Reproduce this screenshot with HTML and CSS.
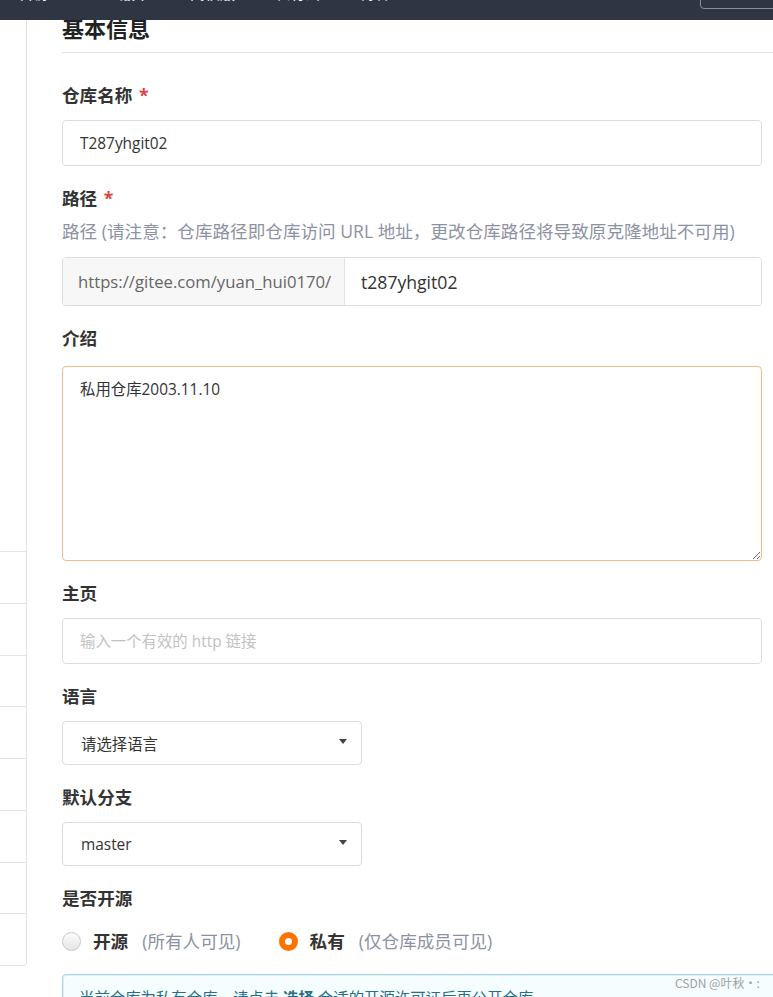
FILE: index.html
```html
<!DOCTYPE html>
<html lang="zh-CN">
<head>
  <meta charset="UTF-8" />
  <meta name="viewport" content="width=device-width, initial-scale=1.0"/>
  <title>仓库设置 - Gitee</title>
  <link rel="stylesheet" href="styles.css">
</head>
<body>
  <!-- Top Bar -->
  <div class="top-bar">
    <nav class="top-nav">
      <a>开源</a>
      <a>企业版本</a>
      <a>高校版</a>
      <a>私有云</a>
      <a>博客</a>
    </nav>
    <span class="top-btn"></span>
  </div>

  <div class="layout">
    <!-- Side Menu -->
    <aside class="side-menu">
      <div class="side-head"></div>
      <div class="side-item"></div>
      <div class="side-item"></div>
      <div class="side-item"></div>
      <div class="side-item"></div>
      <div class="side-item"></div>
      <div class="side-item"></div>
      <div class="side-item"></div>
      <div class="side-item"></div>
    </aside>

    <!-- Main Content -->
    <main class="main-content">
      <h2 class="section-title">基本信息</h2>

      <form class="repo-form">
        <div class="field">
          <label class="field-label">仓库名称 <span class="required">*</span></label>
          <input class="text-input" type="text" value="T287yhgit02">
        </div>

        <div class="field">
          <label class="field-label">路径 <span class="required">*</span></label>
          <div class="field-hint">路径 (请注意：仓库路径即仓库访问 URL 地址，更改仓库路径将导致原克隆地址不可用)</div>
          <div class="input-group">
            <span class="input-addon">https://gitee.com/yuan_hui0170/</span>
            <input class="group-input" type="text" value="t287yhgit02">
          </div>
        </div>

        <div class="field">
          <label class="field-label">介绍</label>
          <textarea class="text-area">私用仓库2003.11.10</textarea>
        </div>

        <div class="field">
          <label class="field-label">主页</label>
          <input class="text-input" type="text" placeholder="输入一个有效的 http 链接">
        </div>

        <div class="field">
          <label class="field-label">语言</label>
          <div class="select-box">
            <span>请选择语言</span>
            <i class="caret"></i>
          </div>
        </div>

        <div class="field">
          <label class="field-label">默认分支</label>
          <div class="select-box">
            <span>master</span>
            <i class="caret"></i>
          </div>
        </div>

        <div class="field field-last">
          <label class="field-label">是否开源</label>
          <div class="radio-row">
            <label class="radio-option">
              <span class="radio"></span>
              <strong>开源</strong>
              <span class="radio-note">(所有人可见)</span>
            </label>
            <label class="radio-option">
              <span class="radio checked"></span>
              <strong>私有</strong>
              <span class="radio-note">(仅仓库成员可见)</span>
            </label>
          </div>
        </div>

        <div class="info-box">
          当前仓库为私有仓库，请点击 <strong>选择</strong> 合适的开源许可证后再公开仓库
        </div>
      </form>
    </main>
  </div>

  <div class="watermark">CSDN @叶秋·:</div>
</body>
</html>
```

FILE: styles.css
```css
html, body {
  height: 100%;
}

body {
  margin: 0;
  overflow: hidden;
  background: #fff;
  font-family: "Open Sans", "Noto Sans CJK SC", sans-serif;
  color: #333;
}

.top-bar {
  position: relative;
  height: 20px;
  background: #2f3542;
  overflow: hidden;
}

.top-nav {
  display: flex;
  gap: 40px;
  padding-left: 20px;
  margin-top: -16px;
}

.top-nav a {
  color: #fff;
  font-size: 15px;
  line-height: 18px;
}

.top-btn {
  position: absolute;
  top: -10px;
  left: 700px;
  width: 100px;
  height: 17px;
  border: 1px solid #8a8f9c;
  border-radius: 4px;
}

.layout {
  display: flex;
  align-items: flex-start;
}

.side-menu {
  width: 26px;
  flex-shrink: 0;
  border-right: 1px solid #e3e3e3;
  border-bottom: 1px solid #e3e3e3;
  border-bottom-right-radius: 4px;
}

.side-head {
  height: 531px;
}

.side-item {
  height: 50.75px;
  border-top: 1px solid #e3e3e3;
}

.main-content {
  flex: 1;
  min-width: 0;
  margin-left: 35px;
}

.section-title {
  margin: -3px 0 0;
  padding-bottom: 13px;
  font-size: 22px;
  line-height: 22px;
  font-weight: bold;
  color: #222;
  border-bottom: 1px solid #e3e3e3;
}

.repo-form {
  width: 700px;
  padding-top: 29px;
}

.field {
  margin-bottom: 19px;
}

.field-label {
  display: block;
  margin-bottom: 12px;
  font-size: 17.6px;
  line-height: 26px;
  font-weight: bold;
  color: #333;
}

.required {
  color: #e0403d;
  margin-left: 2px;
}

.field-hint {
  margin: -5px 0 13px;
  font-size: 17.6px;
  line-height: 26px;
  color: #8c92a4;
}

.text-input {
  display: block;
  box-sizing: border-box;
  width: 100%;
  height: 46px;
  padding: 0 17px;
  border: 1px solid #dcdde1;
  border-radius: 4px;
  font-family: inherit;
  font-size: 15.4px;
  color: #333;
  outline: none;
}

.text-input::placeholder {
  color: #c2c2c2;
}

.input-group {
  display: flex;
  height: 49px;
  box-sizing: border-box;
  border: 1px solid #dcdde1;
  border-radius: 4px;
  overflow: hidden;
}

.input-addon {
  display: flex;
  align-items: center;
  width: 282px;
  box-sizing: border-box;
  padding-left: 15px;
  background: #f7f7f7;
  border-right: 1px solid #e3e3e3;
  font-size: 16.7px;
  color: #666;
  white-space: nowrap;
}

.group-input {
  flex: 1;
  border: none;
  padding: 0 16px;
  font-family: inherit;
  font-size: 17.6px;
  color: #333;
  outline: none;
}

.text-area {
  display: block;
  box-sizing: border-box;
  width: 100%;
  height: 195px;
  margin-top: 15px;
  padding: 12px 17px;
  border: 1px solid #f3b988;
  border-radius: 4px;
  font-family: inherit;
  font-size: 15.4px;
  line-height: 22px;
  color: #333;
  outline: none;
  resize: vertical;
}

.select-box {
  display: flex;
  align-items: center;
  justify-content: space-between;
  box-sizing: border-box;
  width: 300px;
  height: 44px;
  padding: 0 14px 0 18px;
  border: 1px solid #dcdde1;
  border-radius: 4px;
  font-size: 15.4px;
  color: #333;
}

.caret {
  width: 0;
  height: 0;
  border-top: 5px solid #444;
  border-left: 4px solid transparent;
  border-right: 4px solid transparent;
  margin-top: -3px;
}

.field-last {
  margin-bottom: 20px;
}

.radio-row {
  display: flex;
  gap: 38px;
  margin-top: 17px;
}

.radio-option {
  display: flex;
  align-items: center;
  font-size: 17.6px;
  line-height: 26px;
}

.radio-option strong {
  margin-left: 12px;
  color: #333;
}

.radio-note {
  margin-left: 14px;
  color: #8c92a4;
}

.radio {
  box-sizing: border-box;
  width: 19px;
  height: 19px;
  border-radius: 50%;
  border: 1px solid #c9c9c9;
  background: linear-gradient(#fdfdfd, #e4e4e4);
}

.radio.checked {
  border: 6px solid #fe7300;
  background: #fff;
}

.info-box {
  width: 760px;
  padding: 13px 16px;
  box-sizing: border-box;
  background: #f5fdff;
  border: 1px solid #a9d4dd;
  border-radius: 4px;
  box-shadow: 0 0 0 1px rgba(169, 212, 221, 0.3) inset;
  font-size: 15.4px;
  line-height: 22px;
  color: #276f86;
}

.watermark {
  position: absolute;
  left: 675px;
  top: 974px;
  font-size: 12px;
  color: #a0a0a0;
  font-family: "Noto Sans CJK SC", sans-serif;
}
```
